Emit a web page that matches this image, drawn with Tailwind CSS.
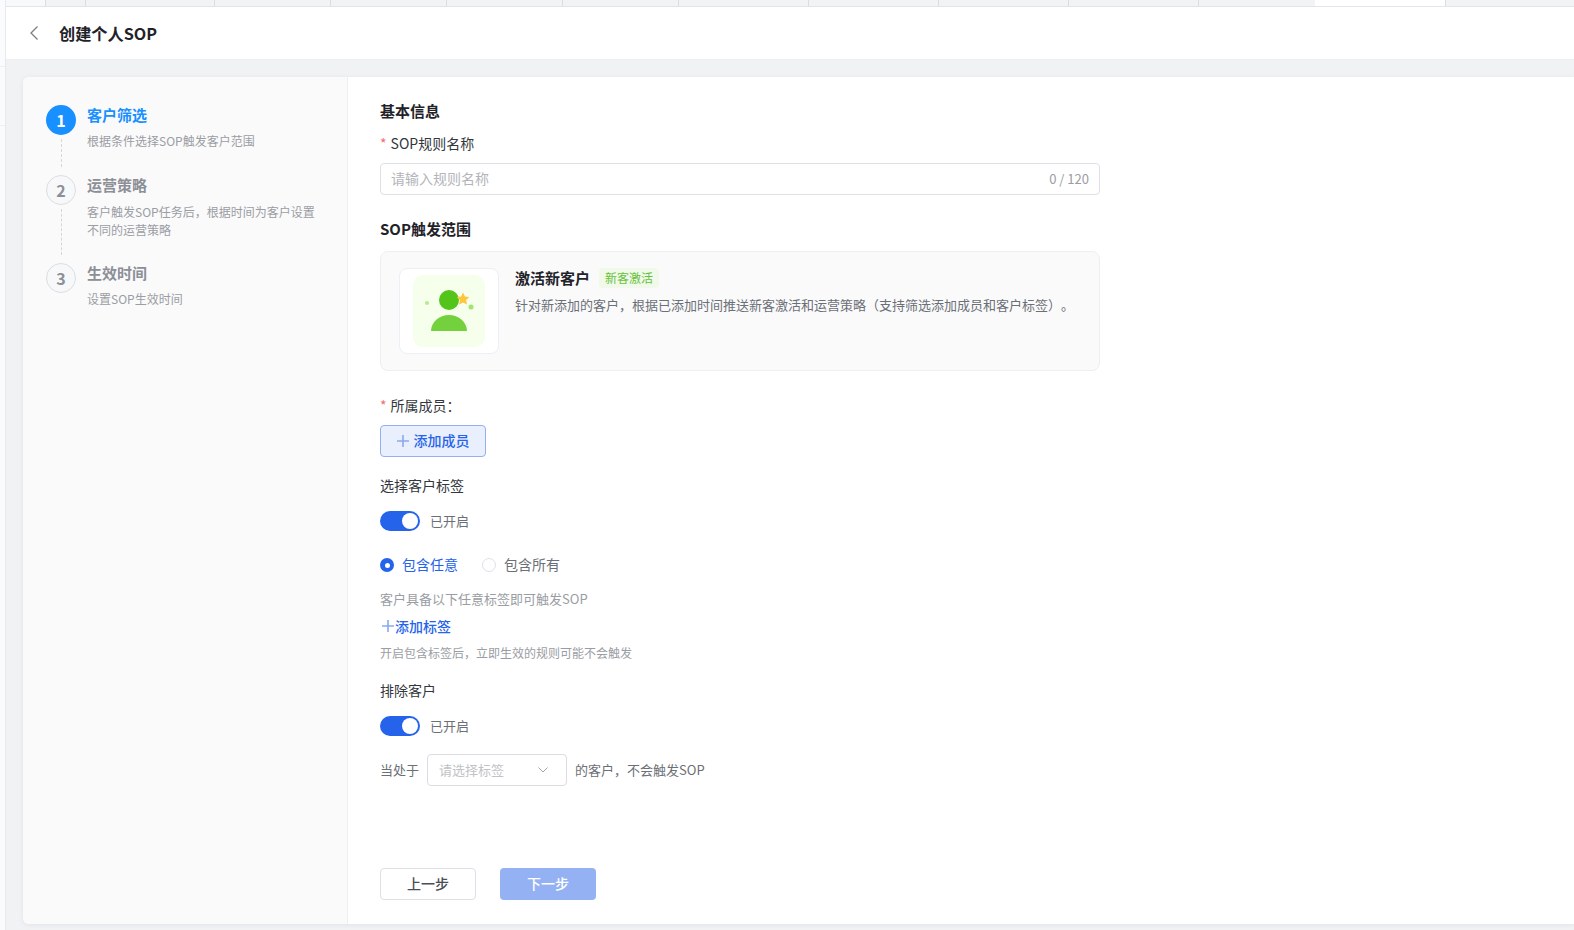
<!DOCTYPE html>
<html lang="zh-CN">
<head>
<meta charset="utf-8">
<title>创建个人SOP</title>
<script src="https://cdn.jsdelivr.net/npm/@tailwindcss/browser@4"></script>
</head>
<body class="h-[930px] w-[1574px] overflow-hidden bg-white font-['Noto_Sans_CJK_SC','Noto_Sans',sans-serif] text-[14px] text-[#1f2329] [text-spacing-trim:space-all]">
<div class="flex h-full">
  <!-- left strip -->
  <div class="flex h-full w-[6px] shrink-0 flex-col border-r border-[#e8e9ef] bg-[#fafbfc]">
    <div class="h-[67px] border-b border-[#eeeff3]"></div>
    <div class="h-[59px] border-b border-[#eeeff3]"></div>
  </div>
  <div class="flex min-w-0 flex-1 flex-col">
    <!-- tabs -->
    <div class="flex h-[7px] shrink-0 border-b border-[#e4e5ec] bg-[#f2f3f5]">
      <div class="w-[40px] border-r border-[#dcdde3] bg-[#f8f9fb]"></div>
      <div class="w-[40px] border-r border-[#dcdde3]"></div>
      <div class="w-[129px] border-r border-[#dcdde3]"></div>
      <div class="w-[116px] border-r border-[#dcdde3]"></div>
      <div class="w-[116px] border-r border-[#dcdde3]"></div>
      <div class="w-[116px] border-r border-[#dcdde3]"></div>
      <div class="w-[116px] border-r border-[#dcdde3]"></div>
      <div class="w-[130px] border-r border-[#dcdde3]"></div>
      <div class="w-[130px] border-r border-[#dcdde3]"></div>
      <div class="w-[130px] border-r border-[#dcdde3]"></div>
      <div class="w-[130px] border-r border-[#dcdde3]"></div>
      <div class="w-[116px]"></div>
      <div class="w-[131px] border-r border-[#dcdde3] bg-white"></div>
      <div class="flex-1"></div>
    </div>
    <!-- header -->
    <div class="flex h-[53px] shrink-0 items-center border-b border-[#eeeff2] bg-white pl-[22px]">
      <svg class="h-[16px] w-[12px]" viewBox="0 0 12 16" fill="none" stroke="#7a7f87" stroke-width="1.3"><path d="M9.5 1.5 3 8l6.5 6.5"/></svg>
      <span class="ml-[19px] mb-[1px] text-[16.2px] leading-[24px] font-bold">创建个人SOP</span>
    </div>
    <!-- body -->
    <div class="min-h-0 flex-1 bg-[#f1f2f4] pt-[17px] pb-[6px] pl-[17px]">
      <div class="flex h-full overflow-hidden rounded-l-[6px] bg-white shadow-[0_1px_4px_rgba(200,205,215,0.4)]">
        <!-- steps -->
        <div class="w-[325px] shrink-0 border-r border-[#eeeff2] bg-[#fafafb] pl-[23px] pt-[28px]">
          <div class="flex h-[70px]">
            <div class="flex w-[30px] flex-col items-center">
              <div class="flex h-[30px] w-[30px] items-center justify-center rounded-full bg-[#1890ff] text-[16px] font-bold text-white">1</div>
              <div class="mt-[4px] h-[28px] border-l border-dashed border-[#d5d6da]"></div>
            </div>
            <div class="ml-[11px]">
              <div class="h-[22px] text-[15px] leading-[20px] font-bold text-[#1890ff]">客户筛选</div>
              <div class="mt-[5px] text-[12px] leading-[18px] text-[#9a9da3]">根据条件选择SOP触发客户范围</div>
            </div>
          </div>
          <div class="flex h-[88px]">
            <div class="flex w-[30px] flex-col items-center">
              <div class="flex h-[30px] w-[30px] items-center justify-center rounded-full border border-[#dcdde1] bg-[#f7f8fa] text-[16px] font-bold text-[#8c8f96]">2</div>
              <div class="mt-[4px] h-[46px] border-l border-dashed border-[#d5d6da]"></div>
            </div>
            <div class="ml-[11px]">
              <div class="h-[22px] text-[15px] leading-[20px] font-bold text-[#8c8f96]">运营策略</div>
              <div class="mt-[6px] w-[235px] text-[12px] leading-[18px] text-[#9a9da3]">客户触发SOP任务后，根据时间为客户设置不同的运营策略</div>
            </div>
          </div>
          <div class="flex">
            <div class="flex h-[30px] w-[30px] items-center justify-center rounded-full border border-[#dcdde1] bg-[#f7f8fa] text-[16px] font-bold text-[#8c8f96]">3</div>
            <div class="ml-[11px]">
              <div class="h-[22px] text-[15px] leading-[20px] font-bold text-[#8c8f96]">生效时间</div>
              <div class="mt-[5px] text-[12px] leading-[18px] text-[#9a9da3]">设置SOP生效时间</div>
            </div>
          </div>
        </div>
        <!-- form -->
        <div class="flex min-w-0 flex-1 flex-col pl-[32px] pb-[24px] pt-[23px]">
          <div class="text-[15px] leading-[22px] font-bold">基本信息</div>
          <div class="mt-[10px] leading-[22px] text-[#33373d]"><span class="mr-[4px] text-[#f56c6c]">*</span>SOP规则名称</div>
          <div class="mt-[9px] flex h-[32px] w-[720px] items-center justify-between rounded-[4px] border border-[#dfe0e6] bg-white pl-[10px] pr-[10px]">
            <span class="mb-[2px] text-[14px] text-[#b3b5ba]">请输入规则名称</span>
            <span class="text-[13px] text-[#9a9da3]">0 / 120</span>
          </div>
          <div class="mt-[23px] text-[15px] leading-[22px] font-bold">SOP触发范围</div>
          <div class="mt-[11px] flex h-[120px] w-[720px] rounded-[8px] border border-[#eeeff3] bg-[#fafafb] pl-[18px] pt-[16px]">
            <div class="flex h-[86px] w-[100px] items-center justify-center rounded-[8px] border border-[#eeeff5] bg-white">
              <div class="h-[72px] w-[72px] rounded-[10px] bg-[#f5ffec]">
                <svg class="h-[72px] w-[72px]" viewBox="0 0 72 72">
                  <circle cx="14" cy="28" r="2" fill="#b4ec8c"/>
                  <circle cx="58" cy="32" r="2.5" fill="#a3e46f"/>
                  <circle cx="36" cy="25" r="10" fill="#52c41a"/>
                  <path d="M18 56a18 16 0 0 1 36 0z" fill="#73d13d"/>
                  <path d="M50 17.5l1.9 4 4.4.6-3.2 3 .8 4.4-3.9-2.1-3.9 2.1.8-4.4-3.2-3 4.4-.6z" fill="#ffc53d"/>
                </svg>
              </div>
            </div>
            <div class="ml-[16px]">
              <div class="flex items-center">
                <span class="text-[15px] leading-[20px] font-bold">激活新客户</span>
                <span class="ml-[9px] rounded-[4px] bg-[#f1f9eb] px-[6px] text-[12px] leading-[20px] text-[#67c23a]">新客激活</span>
              </div>
              <div class="mt-[7px] text-[13px] leading-[20px] text-[#6b6f76]">针对新添加的客户，根据已添加时间推送新客激活和运营策略（支持筛选添加成员和客户标签）。</div>
            </div>
          </div>
          <div class="mt-[23px] leading-[22px] text-[#33373d]"><span class="mr-[4px] text-[#f56c6c]">*</span>所属成员：</div>
          <button class="mt-[9px] flex h-[32px] w-[106px] items-center justify-center rounded-[4px] border border-[#93b0f5] bg-[#e9effd] pb-[1px] text-[14px] font-medium text-[#2563eb]">
            <svg class="mr-[5px] h-[12px] w-[12px]" viewBox="0 0 12 12" stroke="#8aa9f0" stroke-width="1.6"><path d="M6 0v12M0 6h12"/></svg>添加成员
          </button>
          <div class="mt-[17px] leading-[22px] text-[#33373d]">选择客户标签</div>
          <div class="mt-[15px] flex h-[20px] items-center">
            <div class="flex h-[20px] w-[40px] items-center justify-end rounded-full bg-[#2563eb] pr-[2px]"><div class="h-[16px] w-[16px] rounded-full bg-white"></div></div>
            <span class="ml-[10px] mb-[1px] text-[13px] text-[#6b6f76]">已开启</span>
          </div>
          <div class="mt-[24px] flex h-[20px] items-center text-[14px]">
            <div class="flex h-[14px] w-[14px] items-center justify-center rounded-full bg-[#2563eb]"><div class="h-[5px] w-[5px] rounded-full bg-white"></div></div>
            <span class="ml-[8px] mb-[1px] text-[#2563eb]">包含任意</span>
            <div class="ml-[24px] h-[14px] w-[14px] rounded-full border border-[#dfe0e6] bg-white"></div>
            <span class="ml-[8px] mb-[1px] text-[#6b6f76]">包含所有</span>
          </div>
          <div class="mt-[14px] text-[13px] leading-[20px] text-[#9a9da3]">客户具备以下任意标签即可触发SOP</div>
          <div class="mt-[7px] flex h-[20px] items-center text-[14px] font-medium text-[#2563eb]">
            <svg class="ml-[2px] mr-[1px] h-[12px] w-[12px]" viewBox="0 0 12 12" stroke="#8aa9f0" stroke-width="1.6"><path d="M6 0v12M0 6h12"/></svg>添加标签
          </div>
          <div class="mt-[7px] text-[12px] leading-[20px] text-[#9a9da3]">开启包含标签后，立即生效的规则可能不会触发</div>
          <div class="mt-[16px] text-[14px] leading-[22px] text-[#33373d]">排除客户</div>
          <div class="mt-[15px] flex h-[20px] items-center">
            <div class="flex h-[20px] w-[40px] items-center justify-end rounded-full bg-[#2563eb] pr-[2px]"><div class="h-[16px] w-[16px] rounded-full bg-white"></div></div>
            <span class="ml-[10px] mb-[1px] text-[13px] text-[#6b6f76]">已开启</span>
          </div>
          <div class="mt-[18px] flex h-[32px] items-center text-[13px] text-[#6b6f76]">
            <span>当处于</span>
            <div class="ml-[8px] flex h-[32px] w-[140px] items-center justify-between rounded-[4px] border border-[#dcdde1] bg-white pl-[11px] pr-[17px]">
              <span class="text-[#c0c2c6]">请选择标签</span>
              <svg class="h-[8px] w-[12px]" viewBox="0 0 12 8" fill="none" stroke="#a0a3a9" stroke-width="1"><path d="M1.5 1.5 6 6l4.5-4.5"/></svg>
            </div>
            <span class="ml-[8px]">的客户，不会触发SOP</span>
          </div>
          <div class="mt-auto flex gap-[24px]">
            <button class="h-[32px] w-[96px] rounded-[4px] border border-[#dfe0e6] bg-white pb-[2px] text-[14px] font-medium text-[#4a4e55]">上一步</button>
            <button class="h-[32px] w-[96px] rounded-[4px] bg-[#94b1f4] pb-[2px] text-[14px] font-medium text-white">下一步</button>
          </div>
        </div>
      </div>
    </div>
  </div>
</div>
</body>
</html>
